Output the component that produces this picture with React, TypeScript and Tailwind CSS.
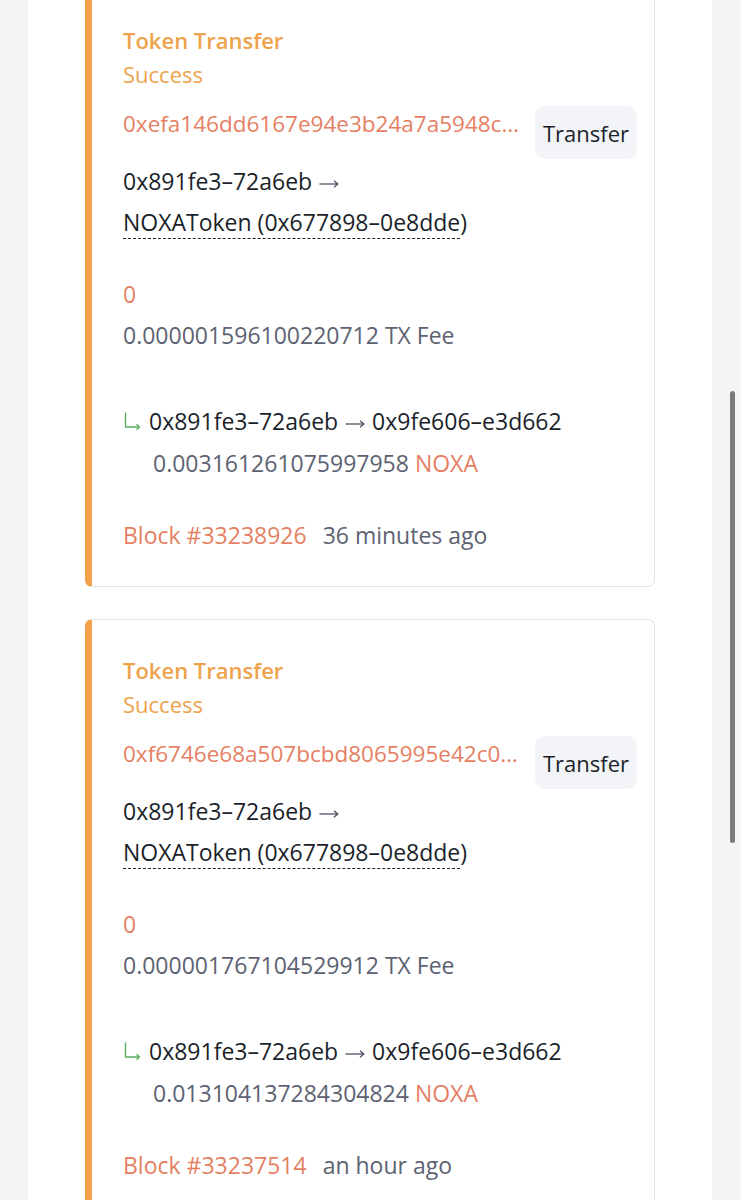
import React from "react";

type Tx = {
  hash: string;
  fee: string;
  amount: string;
  block: string;
  ago: string;
};

const txs: Tx[] = [
  {
    hash: "0xefa146dd6167e94e3b24a7a5948c2b7d0e1f2a3b4c5d6e7f8091a2b3c4d5e6f7",
    fee: "0.000001596100220712",
    amount: "0.003161261075997958",
    block: "Block #33238926",
    ago: "36 minutes ago",
  },
  {
    hash: "0xf6746e68a507bcbd8065995e42c0a1b2c3d4e5f60718293a4b5c6d7e8f901234",
    fee: "0.000001767104529912",
    amount: "0.013104137284304824",
    block: "Block #33237514",
    ago: "an hour ago",
  },
];

function SubArrow() {
  return (
    <svg width="20" height="20" viewBox="0 0 20 20" fill="none" className="shrink-0">
      <path d="M2.5 1.5 V16 H16" stroke="#5cad5f" strokeWidth="1.4" />
      <path d="M13.5 13.2 L16.5 16 L13.5 18.8" stroke="#5cad5f" strokeWidth="1.4" fill="none" />
    </svg>
  );
}

function Arrow() {
  return (
    <svg
      width="20"
      height="10"
      viewBox="0 0 20 10"
      fill="none"
      className="mx-[1px] inline-block align-middle"
    >
      <path d="M0.5 5 H18.5" stroke="#4b5262" strokeWidth="1.3" />
      <path d="M15 1.8 L18.8 5 L15 8.2" stroke="#4b5262" strokeWidth="1.3" fill="none" />
    </svg>
  );
}

function Card({ tx }: { tx: Tx }) {
  return (
    <div className="rounded-[7px] border border-[#e3e4e8] border-l-[7px] border-l-[#f2a14a] bg-white pl-[31px] pr-[17px] pt-[36px] pb-[37px] text-[23px] leading-[28px]">
      <div className="text-[22px] font-semibold text-[#eea24c]">Token Transfer</div>
      <div className="mt-[6px] text-[22px] text-[#eea24c]">Success</div>
      <div className="mt-[18px] flex items-start gap-[12px]">
        <div className="min-w-0 flex-1 truncate pt-[4px] text-[22.5px] text-[#e57f63]">{tx.hash}</div>
        <div className="flex h-[53px] w-[102px] shrink-0 items-center justify-center rounded-[10px] bg-[#f3f4f7] text-[22px] text-[#1b1f2a]">
          Transfer
        </div>
      </div>
      <div className="mt-[8px] text-[#1b1f2a]">
        0x891fe3–72a6eb <Arrow />
      </div>
      <div className="mt-[13px] text-[#1b1f2a]">
        <span className="border-b-[1.5px] border-dashed border-[#1b1f2a]">NOXAToken (0x677898–0e8dde</span>)
      </div>
      <div className="mt-[44px] text-[#e57f63]">0</div>
      <div className="mt-[13px] text-[#5d6272]">{tx.fee} TX Fee</div>
      <div className="mt-[58px] flex items-center gap-[6px] text-[#1b1f2a]">
        <SubArrow />
        <span>
          0x891fe3–72a6eb <Arrow /> 0x9fe606–e3d662
        </span>
      </div>
      <div className="mt-[14px] pl-[30px] text-[#5d6272]">
        {tx.amount} <span className="text-[#e57f63]">NOXA</span>
      </div>
      <div className="mt-[44px] flex gap-[16px]">
        <span className="text-[#e57f63]">{tx.block}</span>
        <span className="text-[#5d6272]">{tx.ago}</span>
      </div>
    </div>
  );
}

export default function App() {
  return (
    <div
      className="relative h-[1200px] overflow-hidden bg-[#f3f4f6]"
      style={{ fontFamily: "'Open Sans', 'Noto Sans', sans-serif" }}
    >
      <div className="ml-[28px] mr-[29px] flex h-full flex-col bg-white px-[57px]">
        <div className="-mt-[11px] flex flex-col gap-[32px]">
          {txs.map((tx, i) => (
            <Card key={i} tx={tx} />
          ))}
        </div>
      </div>
      <div className="absolute right-[6px] top-[391px] h-[452px] w-[5px] rounded-full bg-[#7b7b7b]" />
    </div>
  );
}
